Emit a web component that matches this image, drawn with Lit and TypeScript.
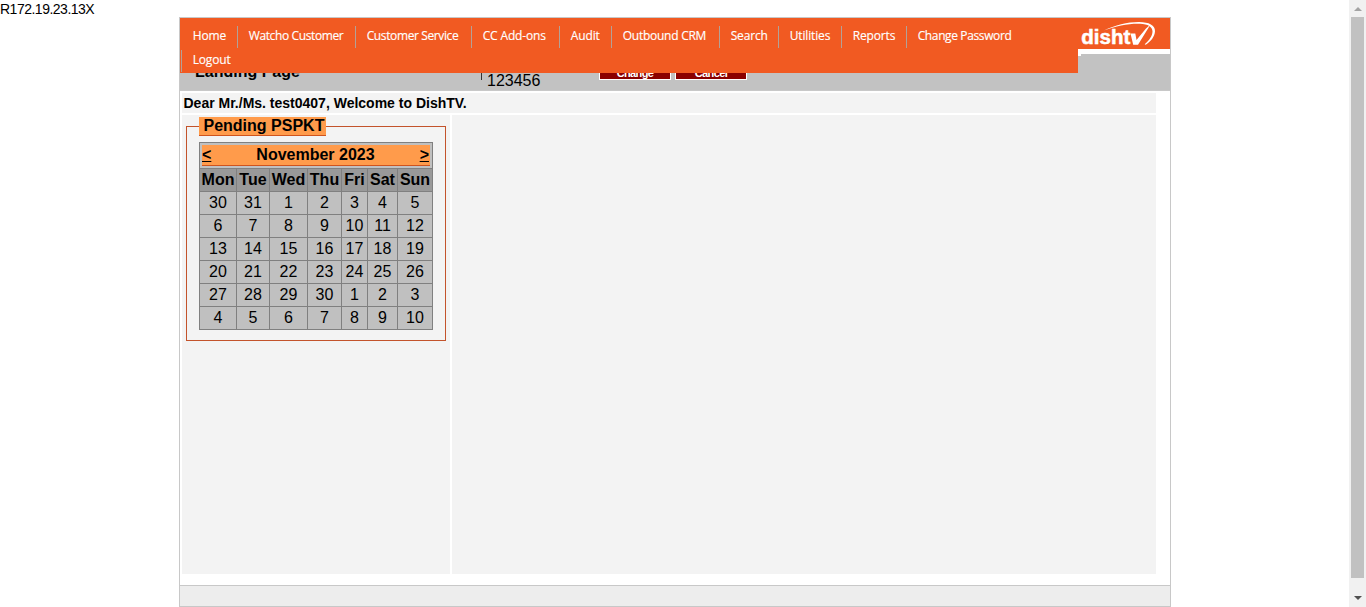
import { LitElement, html, css } from "lit";
import { customElement } from "lit/decorators.js";

interface MenuItem {
  label: string;
  width: number;
}

const MENU: MenuItem[] = [
  { label: "Home", width: 56 },
  { label: "Watcho Customer", width: 118 },
  { label: "Customer Service", width: 116 },
  { label: "CC Add-ons", width: 88 },
  { label: "Audit", width: 52 },
  { label: "Outbound CRM", width: 108 },
  { label: "Search", width: 59 },
  { label: "Utilities", width: 63 },
  { label: "Reports", width: 65 },
  { label: "Change Password", width: 117 },
  { label: "Logout", width: 60 },
];

const tracking = (label: string) =>
  label.length > 14 ? -0.38 : label === "Outbound CRM" ? -0.25 : label.length > 5 ? -0.15 : -0.1;

const DAYS = ["Mon", "Tue", "Wed", "Thu", "Fri", "Sat", "Sun"];
const DATES = [
  30, 31, ...Array.from({ length: 30 }, (_, i) => i + 1),
  ...Array.from({ length: 10 }, (_, i) => i + 1),
];

@customElement("main-menu")
class MainMenu extends LitElement {
  static styles = css`
    :host { display: block; }
    .menu {
      box-sizing: border-box; width: 898px; height: 55px; padding: 6px 0 0 1px;
      display: flex; flex-wrap: wrap; align-content: flex-start;
      background: #f15a22; color: #fff;
      font: 12px/24px "Open Sans", sans-serif;
      -webkit-text-stroke: 0.15px #fff;
    }
    .item {
      box-sizing: border-box; height: 24px; padding-left: 11.7px; white-space: nowrap;
      background: linear-gradient(#b3a197, #b3a197) 0 2px / 1px 22px no-repeat;
    }
    .item.first { background: none; }
    .item.last-in-row { margin-right: 40px; }
  `;
  render() {
    return html`<nav class="menu">
      ${MENU.map(
        (m, i) => html`<div
          class="item ${i === 0 ? "first" : ""} ${m.label === "Change Password" ? "last-in-row" : ""}"
          style="width:${m.width}px;letter-spacing:${tracking(m.label)}px"
        >${m.label}</div>`
      )}
    </nav>`;
  }
}

@customElement("dish-logo")
class DishLogo extends LitElement {
  static styles = css`
    :host { display: block; width: 92px; height: 38px; background: linear-gradient(#f15a22 31px, #fff 31px 36px, transparent 36px); }
    .logo { display: block; }
    .word { font: bold 20px "Liberation Sans", sans-serif; fill: #fff; stroke: #fff; stroke-width: 0.5px; }
  `;
  render() {
    return html`<svg class="logo" width="92" height="38" viewBox="0 0 92 38">
      <rect x="0" y="31" width="3" height="7" fill="#fff" />
      <text class="word" x="3.3" y="26.4" textLength="49" lengthAdjust="spacingAndGlyphs">disht</text>
      <path d="M52.5 15.5h4.8l1.200 6.500L68 10.500 72.500 6.500 60 26.700h-4.800z" fill="#fff" />
      <path d="M26 12.5C37 7 50 3.900 61 4c10 .1 16.300 3.200 16 9.200-.3 5.500-4.300 10.300-9.300 13.600l-1-.5c4.600-4 7.600-8.400 7.800-12.600.2-4.900-4.500-7.700-12.500-8C51 5.300 38 8 26 12.500z" fill="#fff" />
    </svg>`;
  }
}

@customElement("month-calendar")
class MonthCalendar extends LitElement {
  static styles = css`
    :host { display: block; }
    .grid {
      box-sizing: border-box; width: 234px; padding: 1px; display: grid; gap: 1px;
      grid-template-columns: 36px 32px 37px 33px 25px 29px 34px;
      grid-template-rows: 25px; grid-auto-rows: 22px;
      background: #808080; color: #000; text-align: center; line-height: 22px;
    }
    .head { grid-column: 1 / -1; background: #c0c0c0; padding: 2px; display: flex; }
    .title {
      flex: 1; box-sizing: border-box; height: 21px; padding: 0 1px 0 0; display: flex;
      justify-content: space-between; line-height: 19px; font-weight: bold;
      background: #ff9b4b; border-bottom: 1px solid #cf541e;
    }
    .arrow { text-decoration: underline; }
    .day { background: #999; font-weight: bold; line-height: 22px; white-space: nowrap; }
    .date { background: #c0c0c0; }
  `;
  render() {
    return html`<div class="grid">
      <div class="head"><div class="title">
        <span class="arrow">&lt;</span><span>November 2023</span><span class="arrow">&gt;</span>
      </div></div>
      ${DAYS.map((d) => html`<div class="day">${d}</div>`)}
      ${DATES.map((d) => html`<div class="date">${d}</div>`)}
    </div>`;
  }
}

@customElement("app-root")
class AppRoot extends LitElement {
  static styles = css`
    :host {
      display: flex; height: 607px; overflow: hidden; background: #fff; color: #000;
      font: 16px "Liberation Sans", Arial, sans-serif;
    }
    .view { flex: 1; min-width: 0; }
    .version { height: 17px; font-size: 14px; line-height: 18px; letter-spacing: -0.5px; }
    .page {
      box-sizing: border-box; width: 992px; height: 590px; margin-left: 179px;
      border: 1px solid #c8c8c8; display: flex; flex-direction: column;
    }
    .header {
      position: relative; height: 72px; background: #c2c2c2;
      border-bottom: 1px solid #c8c8c8; display: flex; align-items: flex-start;
    }
    .menu { position: absolute; left: 0; top: 0; }
    .logo { position: absolute; right: 0; top: 0; }
    .heading { width: 285px; padding: 45px 0 0 15px; font-weight: bold; line-height: 18px; }
    .tick { width: 1px; height: 9px; margin: 53px 5px 0 1px; background: #333; }
    .code { width: 112px; padding-top: 54px; line-height: 18px; }
    .button {
      box-sizing: border-box; width: 72px; height: 19px; margin: 43px 4px 0 0;
      background: #8b0000; border: 1px solid #fff; color: #fff;
      font-size: 11px; font-weight: bold; line-height: 25px; text-align: center; letter-spacing: -0.6px;
    }
    .button .caption { display: block; margin-top: -1px; }
    .welcome {
      box-sizing: border-box; width: 974px; height: 20px; margin: 2px 0 2px 2px; padding-left: 1.5px;
      background: #f3f3f3; font-size: 14px; font-weight: bold; line-height: 20px;
    }
    .columns { display: flex; gap: 2px; height: 459px; margin-left: 2px; }
    .side { box-sizing: border-box; width: 268px; padding: 11px 4px; background: #f3f3f3; }
    .main { width: 704px; background: #f3f3f3; }
    .group { box-sizing: border-box; width: 260px; height: 215px; border: 1px solid #c3532b; padding-left: 12px; }
    .legend {
      box-sizing: border-box; width: 127px; height: 19px; margin: -10px 0 6px; padding-left: 4.5px;
      background: #ff9b4b; border-bottom: 1px solid #cf541e; font-weight: bold; line-height: 18px; white-space: nowrap;
    }
    .footer { height: 20px; margin-top: auto; background: #ededed; border-top: 1px solid #c8c8c8; }
    .scrollbar { width: 17px; background: #f1f1f1; display: flex; flex-direction: column; align-items: center; }
    .thumb { width: 13px; height: 561px; background: #c1c1c1; }
    .up, .down { display: block; width: 17px; height: 17px; }
    .down { margin-top: auto; }
  `;
  render() {
    return html`
      <div class="view">
        <div class="version">R172.19.23.13X</div>
        <div class="page">
          <div class="header">
            <div class="heading">Landing Page</div>
            <div class="tick"></div>
            <div class="code">123456</div>
            <div class="button"><span class="caption">Change</span></div>
            <div class="button"><span class="caption">Cancel</span></div>
            <main-menu class="menu"></main-menu>
            <dish-logo class="logo"></dish-logo>
          </div>
          <div class="welcome">Dear Mr./Ms. test0407, Welcome to DishTV.</div>
          <div class="columns">
            <div class="side">
              <div class="group">
                <div class="legend">Pending PSPKT</div>
                <month-calendar></month-calendar>
              </div>
            </div>
            <div class="main"></div>
          </div>
          <div class="footer"></div>
        </div>
      </div>
      <div class="scrollbar">
        <svg class="up" viewBox="0 0 17 17"><path d="M5 11l4-4 4 4z" fill="#a3a3a3" /></svg>
        <div class="thumb"></div>
        <svg class="down" viewBox="0 0 17 17"><path d="M5 6h8l-4 4z" fill="#505050" /></svg>
      </div>
    `;
  }
}
